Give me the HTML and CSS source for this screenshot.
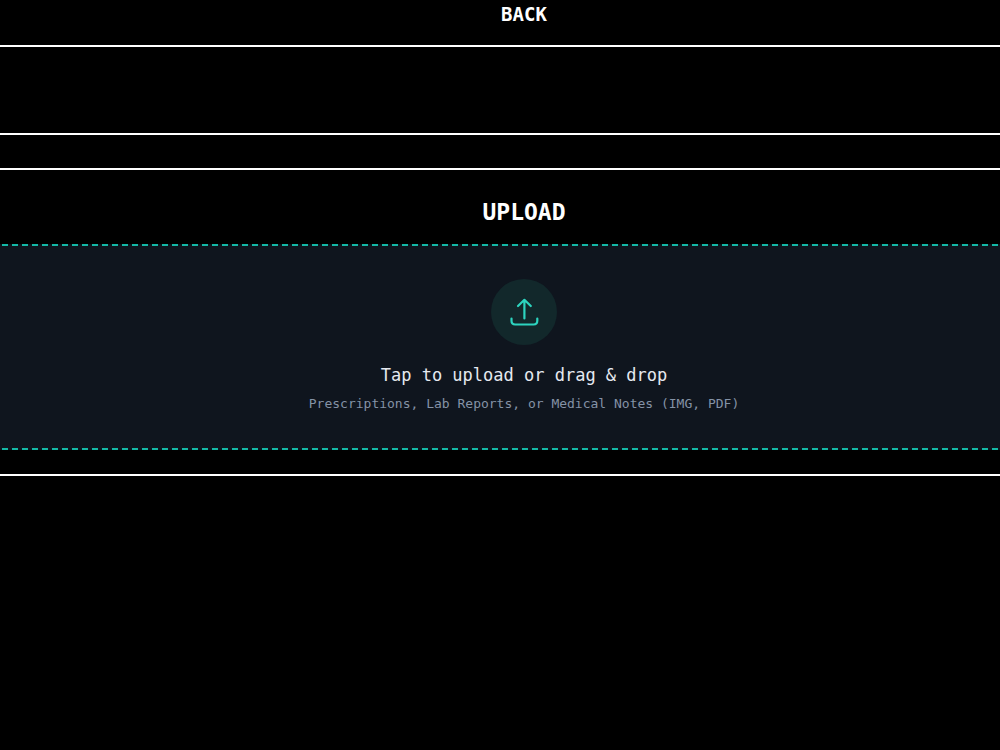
FILE: index.html
```html
<!DOCTYPE html>
<html lang="en">
<head>
	<meta charset="utf-8">
	<title>Upload</title>
	<link rel="stylesheet" href="styles.css">
</head>

<body>
	<header class="topbar">
		<button type="button" class="back">BACK</button>
	</header>

	<div class="panel"></div>

	<main class="upload">
		<h1 class="title">UPLOAD</h1>
		<button type="button" class="dropzone">
			<span class="icon">
				<svg width="30" height="30" viewBox="0 0 30 30" fill="none" stroke="#2dd4bf" stroke-width="2.2" stroke-linecap="round" stroke-linejoin="round">
					<path d="M15.400 21.500V3M9 9L15.400 2.800L21.800 9"/>
					<path d="M2.500 21.500V23.800Q2.500 27.500 6.200 27.500H24.600Q28.300 27.500 28.300 23.800V21.500"/>
				</svg>
			</span>
			<span class="label">Tap to upload or drag &amp; drop</span>
			<span class="hint">Prescriptions, Lab Reports, or Medical Notes (IMG, PDF)</span>
		</button>
	</main>
</body>
</html>
```

FILE: styles.css
```css
body {
	margin: 0;
	background: #000;
	color: #fff;
	font-family: "DejaVu Sans Mono", monospace;
	overflow-x: hidden;
}

button {
	font-family: inherit;
	color: inherit;
	cursor: pointer;
}

.topbar {
	display: flex;
	justify-content: center;
	padding: 2px 0 19px 48px;
	border-bottom: 2px solid #fff;
}

.back {
	padding: 0;
	border: 0;
	background: none;
	font-size: 19px;
	font-weight: bold;
	line-height: 24px;
}

.panel {
	height: 86px;
	border-bottom: 2px solid #fff;
}

.upload {
	margin-top: 33px;
	padding-bottom: 24px;
	border-top: 2px solid #fff;
	border-bottom: 2px solid #fff;
}

.title {
	margin: 0;
	padding: 27px 0 17px 48px;
	font-size: 23px;
	line-height: 30px;
	text-align: center;
}

/* runs past both sides so only the top and bottom dashes show */
.dropzone {
	display: flex;
	flex-direction: column;
	align-items: center;
	box-sizing: border-box;
	width: calc(100% + 16px);
	margin: 0 -8px;
	padding: 33px 0 34px 48px;
	border: 2px dashed #14b8a6;
	background: #0f151e;
}

.icon {
	display: flex;
	align-items: center;
	justify-content: center;
	width: 66px;
	height: 66px;
	margin-bottom: 18px;
	border-radius: 50%;
	background: #12282b;
}

.label {
	margin-bottom: 7px;
	color: #e5e9f0;
	font-size: 17px;
	line-height: 24px;
}

.hint {
	color: #8492a6;
	font-size: 13px;
	line-height: 20px;
}
```
